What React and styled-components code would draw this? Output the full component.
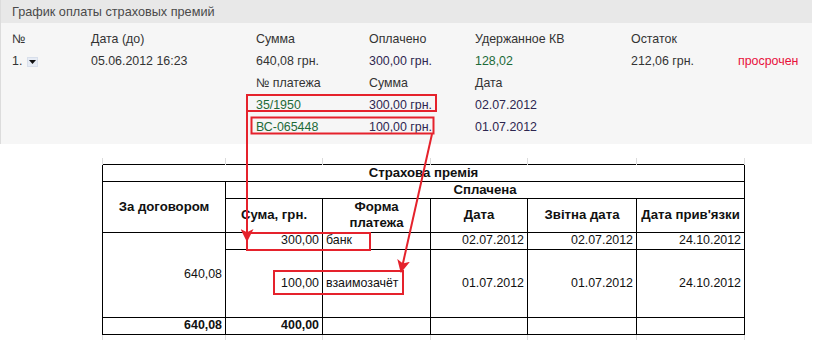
import styled, { createGlobalStyle } from "styled-components";

const GlobalStyle = createGlobalStyle`
  html, body {
    margin: 0;
    padding: 0;
    background: #fff;
  }
  body {
    font-family: "Liberation Sans", Arial, sans-serif;
  }
`;

const payments = [
  { num: "35/1950", sum: "300,00 грн.", date: "02.07.2012" },
  { num: "ВС-065448", sum: "100,00 грн.", date: "01.07.2012" },
];

const Page = () => {
  return (
    <Wrap>
      <GlobalStyle />
      <Panel>
        <PanelTitle>График оплаты страховых премий</PanelTitle>
        <PanelBody>
          <Row>
            <Cell>№</Cell>
            <Cell>Дата (до)</Cell>
            <Cell>Сумма</Cell>
            <Cell>Оплачено</Cell>
            <Cell>Удержанное КВ</Cell>
            <Cell>Остаток</Cell>
            <Cell />
          </Row>
          <Row>
            <Cell>
              1.
              <Toggle>
                <svg width="7" height="4" viewBox="0 0 7 4">
                  <path d="M0 0h7L3.5 4z" fill="#111" />
                </svg>
              </Toggle>
            </Cell>
            <Cell>05.06.2012 16:23</Cell>
            <Cell>640,08 грн.</Cell>
            <Cell tone="sum">300,00 грн.</Cell>
            <Cell tone="green">128,02</Cell>
            <Cell>212,06 грн.</Cell>
            <Cell tone="red">просрочен</Cell>
          </Row>
          <Row>
            <Cell />
            <Cell />
            <Cell>№ платежа</Cell>
            <Cell>Сумма</Cell>
            <Cell>Дата</Cell>
          </Row>
          {payments.map((p) => (
            <Row key={p.num}>
              <Cell />
              <Cell />
              <Cell tone="green">{p.num}</Cell>
              <Cell tone="sum">{p.sum}</Cell>
              <Cell tone="sum">{p.date}</Cell>
            </Row>
          ))}
        </PanelBody>
      </Panel>

      <Sheet>
        <Table>
          <colgroup>
            <col style={{ width: 123 }} />
            <col style={{ width: 97 }} />
            <col style={{ width: 108 }} />
            <col style={{ width: 97 }} />
            <col style={{ width: 109 }} />
            <col style={{ width: 108 }} />
          </colgroup>
          <tbody>
            <StubRow>
              <Stub /><Stub /><Stub /><Stub /><Stub /><Stub />
            </StubRow>
            <tr>
              <Th colSpan={6} h={17}>Страхова премія</Th>
            </tr>
            <tr>
              <Th rowSpan={2}>За договором</Th>
              <Th colSpan={5} h={17}>Сплачена</Th>
            </tr>
            <tr>
              <Th h={34}>Сума, грн.</Th>
              <Th>Форма<br />платежа</Th>
              <Th>Дата</Th>
              <Th>Звітна дата</Th>
              <Th>Дата прив'язки</Th>
            </tr>
            <tr>
              <Td rowSpan={2} align="right">640,08</Td>
              <Td align="right" h={17}>300,00</Td>
              <Td>банк</Td>
              <Td align="right">02.07.2012</Td>
              <Td align="right">02.07.2012</Td>
              <Td align="right">24.10.2012</Td>
            </tr>
            <tr>
              <Td align="right" h={68}>100,00</Td>
              <Td>взаимозачёт</Td>
              <Td align="right">01.07.2012</Td>
              <Td align="right">01.07.2012</Td>
              <Td align="right">24.10.2012</Td>
            </tr>
            <tr>
              <Td align="right" bold h={17}>640,08</Td>
              <Td align="right" bold>400,00</Td>
              <Td /><Td /><Td /><Td />
            </tr>
            <StubRow>
              <Stub /><Stub /><Stub /><Stub /><Stub /><Stub />
            </StubRow>
          </tbody>
        </Table>
      </Sheet>

      <Marks width="815" height="343" viewBox="0 0 815 343">
        <defs>
          <marker
            id="head"
            viewBox="0 0 12 12"
            refX="11"
            refY="6"
            markerWidth="13"
            markerHeight="13"
            markerUnits="userSpaceOnUse"
            orient="auto"
          >
            <path d="M0 0L12 6L0 12L3 6z" fill="#e5222c" />
          </marker>
        </defs>
        <g fill="none" stroke="#e5222c" strokeWidth="2">
          <rect x="247" y="95" width="189" height="16" />
          <rect x="251.5" y="117.5" width="182" height="16" />
          <rect x="247" y="233" width="123" height="17" />
          <rect x="274" y="271" width="129" height="23" />
          <path d="M247 112V241" markerEnd="url(#head)" />
          <path d="M432 134L401 272" markerEnd="url(#head)" />
        </g>
      </Marks>
    </Wrap>
  );
};

const Wrap = styled.div`
  position: relative;
  width: 815px;
  height: 343px;
  overflow: hidden;
`;

const Panel = styled.section`
  width: 812px;
  background: #f6f6f6;
  border-left: 1px solid #dcdcdc;
  box-sizing: border-box;
`;

const PanelTitle = styled.div`
  height: 23px;
  line-height: 24px;
  padding-left: 11px;
  background: #e8e8e8;
  color: #4a4a4a;
  font-size: 12.7px;
`;

const PanelBody = styled.div`
  padding: 5px 0 6px 11px;
`;

const Row = styled.div`
  display: grid;
  grid-template-columns: 79px 165px 113px 106px 156px 107px 1fr;
  height: 22px;
  align-items: center;
  font-size: 12.4px;
  color: #333;
`;

const tones = {
  green: "#1d6a38",
  red: "#e8103a",
  sum: "#2e2650",
};

const Cell = styled.div`
  display: flex;
  align-items: center;
  white-space: nowrap;
  color: ${(p) => tones[p.tone] || "#333"};
`;

const Toggle = styled.span`
  display: inline-flex;
  align-items: center;
  justify-content: center;
  width: 9px;
  height: 8px;
  margin-left: 5px;
  margin-top: 1px;
  background: #e6ebf4;
  border: 1px solid #d8dfeb;
`;

const Sheet = styled.div`
  padding: 14px 0 0 102px;
`;

const Table = styled.table`
  border-collapse: collapse;
  table-layout: fixed;
  width: 643px;
  font-family: "Liberation Sans", Arial, sans-serif;
  font-size: 12.4px;
  color: #111;
`;

const StubRow = styled.tr`
  height: 6px;
  font-size: 0;
  line-height: 0;
`;

const Stub = styled.td`
  padding: 0;
  height: 5px;
  font-size: 0;
  line-height: 0;
  border-left: 1px solid #dcdcdc;
  border-right: 1px solid #dcdcdc;
`;

const Th = styled.td`
  border: 1px solid #000;
  padding: 0 2px;
  height: ${(p) => (p.h ? `${p.h - 1}px` : "auto")};
  text-align: center;
  vertical-align: middle;
  font-weight: bold;
  font-size: 13.2px;
  line-height: 16px;
  white-space: nowrap;
`;

const Td = styled.td`
  border: 1px solid #000;
  padding: 0 3px;
  height: ${(p) => (p.h ? `${p.h - 1}px` : "auto")};
  text-align: ${(p) => p.align || "left"};
  vertical-align: middle;
  font-weight: ${(p) => (p.bold ? "bold" : "normal")};
  line-height: 15px;
  white-space: nowrap;
`;

const Marks = styled.svg`
  position: absolute;
  left: 0;
  top: 0;
  pointer-events: none;
`;

export default Page;
